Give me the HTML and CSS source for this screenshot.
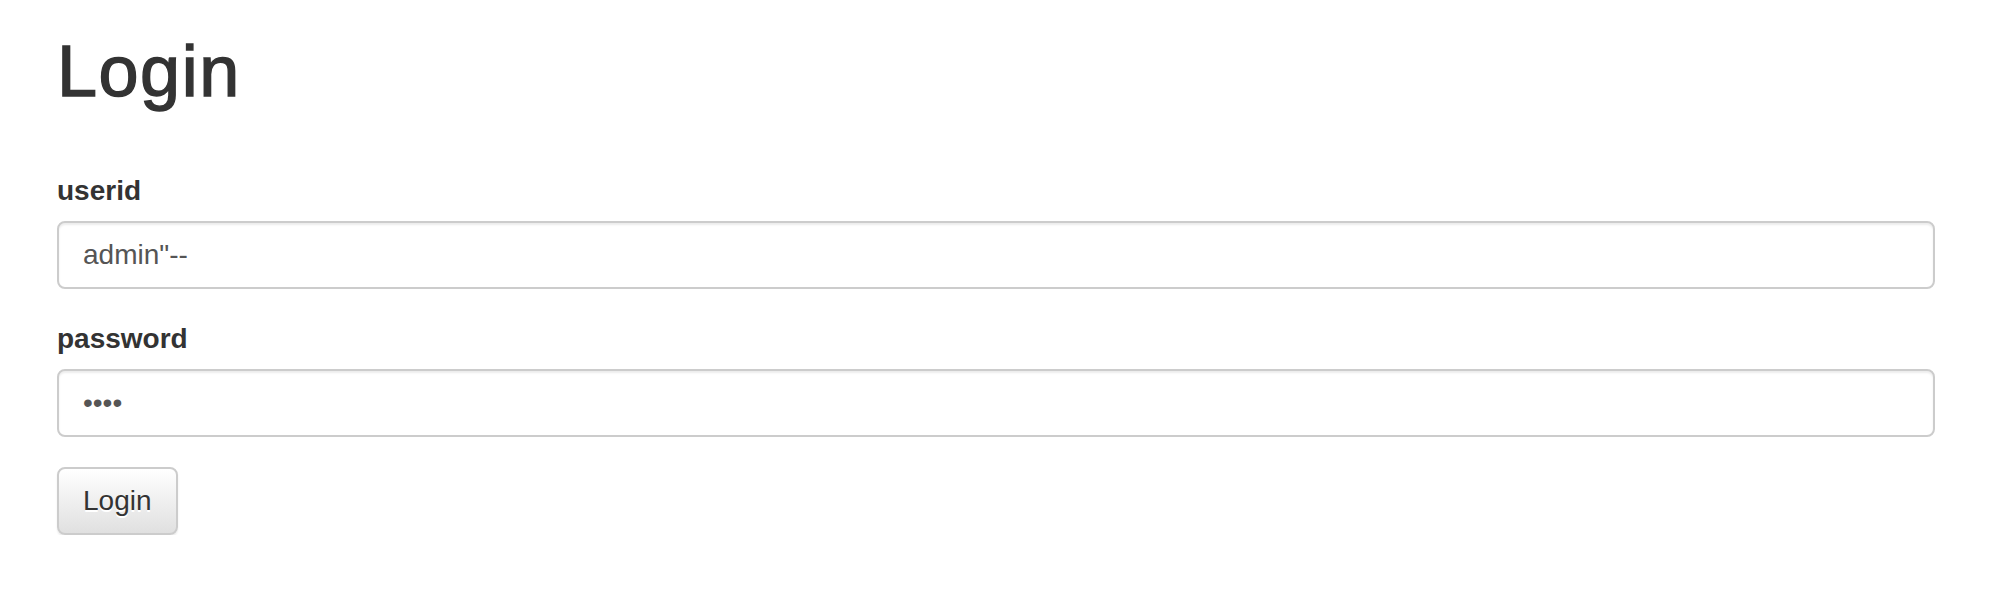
FILE: index.html
```html
<!DOCTYPE html>
<html lang="en">
<head>
  <meta charset="UTF-8">
  <title>Login</title>
  <meta name="viewport" content="width=device-width, initial-scale=1">
  <link rel="stylesheet" href="styles.css">
</head>
<body>
  <div class="container">
    <h1>Login</h1>
    <form class="login-form" action="#" method="post">
      <div class="form-group">
        <label for="userid">userid</label>
        <input type="text" id="userid" name="userid" class="form-control" value="admin&quot;--">
      </div>
      <div class="form-group">
        <label for="password">password</label>
        <input type="password" id="password" name="password" class="form-control" value="test">
      </div>
      <button type="submit" class="btn btn-default">Login</button>
    </form>
  </div>
</body>
</html>
```

FILE: styles.css
```css
html, body {
  margin: 0;
  background: #fff;
}
body {
  color: #333;
  font-family: "Liberation Sans", Arial, Helvetica, sans-serif;
  font-size: 28px;
  line-height: 40px;
}
* {
  box-sizing: border-box;
}

.container {
  padding: 0 73px 0 57px;
}

h1 {
  font-size: 72px;
  font-weight: 500;
  line-height: 1.1;
  letter-spacing: 1.5px;
  -webkit-text-stroke: 1.4px #333;
  margin: 32px 0 60px 0;
  color: #333;
}

.form-group {
  margin-bottom: 30px;
}
label {
  display: inline-block;
  font-weight: bold;
  margin-bottom: 10px;
}

.form-control {
  display: block;
  width: 100%;
  height: 68px;
  padding: 12px 24px;
  font-family: inherit;
  font-size: 28px;
  line-height: 40px;
  color: #555;
  background: #fff;
  border: 2px solid #ccc;
  border-radius: 8px;
  box-shadow: inset 0 2px 2px rgba(0,0,0,0.075);
  outline: none;
}

.btn {
  display: inline-block;
  padding: 12px 24px;
  font-family: inherit;
  font-size: 28px;
  line-height: 40px;
  border-radius: 8px;
  cursor: pointer;
}
.btn-default {
  color: #333;
  background: linear-gradient(to bottom, #fff 0%, #e0e0e0 100%);
  border: 2px solid #ccc;
  text-shadow: 0 2px 0 #fff;
  box-shadow: inset 0 2px 0 rgba(255,255,255,0.15), 0 2px 2px rgba(0,0,0,0.075);
}
```
